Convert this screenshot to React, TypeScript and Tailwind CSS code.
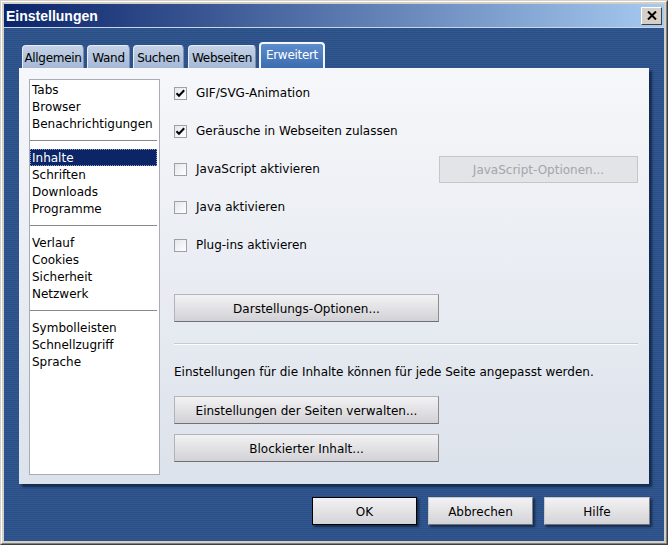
import React from "react";

const listGroups: string[][] = [
  ["Tabs", "Browser", "Benachrichtigungen"],
  ["Inhalte", "Schriften", "Downloads", "Programme"],
  ["Verlauf", "Cookies", "Sicherheit", "Netzwerk"],
  ["Symbolleisten", "Schnellzugriff", "Sprache"],
];

function CheckBox({ checked }: { checked: boolean }) {
  return (
    <div className="w-[13px] h-[13px] border border-[#9ca0a8] bg-[linear-gradient(135deg,#e4e6ea,#ffffff)] flex items-center justify-center shrink-0">
      {checked && (
        <svg width="11" height="11" viewBox="0 0 11 11">
          <path d="M1.5 5.2 L4 7.8 L9.2 2.2" stroke="#000" strokeWidth="2" fill="none" />
        </svg>
      )}
    </div>
  );
}

function Btn({
  children,
  className = "",
  disabled = false,
}: {
  children: React.ReactNode;
  className?: string;
  disabled?: boolean;
}) {
  return (
    <div
      className={
        "flex items-center justify-center border pt-[1px] " +
        (disabled
          ? "border-[#c4c6ca] bg-[#e2e4e8] text-[#a4a6aa] "
          : "border-[#b4b4b8] border-b-[#707074] border-r-[#8c8c90] bg-[linear-gradient(to_bottom,#f2f2f4,#d2d2d6)] text-black ") +
        className
      }
    >
      {children}
    </div>
  );
}

function CheckRow({ checked, label, children }: { checked: boolean; label: string; children?: React.ReactNode }) {
  return (
    <div className="h-[38px] flex items-center justify-between">
      <div className="flex items-center">
        <CheckBox checked={checked} />
        <span className="ml-[9px] leading-[17px]">{label}</span>
      </div>
      {children}
    </div>
  );
}

export default function App() {
  return (
    <div className="w-[668px] h-[545px] bg-[#d4d0c8] border border-t-[#d4d0c8] border-l-[#d4d0c8] border-r-[#404040] border-b-[#404040] font-['DejaVu_Sans',Verdana,sans-serif] text-[12px] text-black">
      <div className="h-full border border-t-white border-l-white border-r-[#808080] border-b-[#808080] p-[2px] flex flex-col">
        {/* Title bar */}
        <div className="h-[23px] bg-[linear-gradient(to_right,#0a246a,#a6caf0)] flex items-center justify-between pl-[2px] pr-[2px]">
          <span className="text-white font-bold text-[14px] leading-none font-['Liberation_Sans',Arial,sans-serif]">Einstellungen</span>
          <div className="w-[21px] h-[18px] bg-[#d4d0c8] border border-t-white border-l-white border-r-[#404040] border-b-[#404040] flex items-center justify-center">
            <svg width="10" height="9" viewBox="0 0 10 9">
              <path d="M1 0.5 L9 8.5 M9 0.5 L1 8.5" stroke="#000" strokeWidth="2" />
            </svg>
          </div>
        </div>
        <div className="h-px bg-[#c9d6e8]" />
        {/* Body */}
        <div className="flex-1 bg-[repeating-linear-gradient(to_bottom,#2a4e85_0px,#2a4e85_1px,#31588f_1px,#31588f_2px)] pt-[14px] pl-[15px] pr-[14px] flex flex-col">
          {/* Tabs */}
          <div className="h-[26px] flex items-end pl-[3px]">
            {[
              { t: "Allgemein", w: "w-[62px]", m: "" },
              { t: "Wand", w: "w-[43px]", m: "ml-[3px]" },
              { t: "Suchen", w: "w-[51px]", m: "ml-[3px]" },
              { t: "Webseiten", w: "w-[68px]", m: "ml-[4px]" },
            ].map((tab) => (
              <div
                key={tab.t}
                className={
                  "h-[23px] rounded-t-[4px] border border-b-0 border-[#e8eef8] border-r-[#7a8eb0] bg-[linear-gradient(to_bottom,#c4d2e6,#a4b8d6)] flex items-center justify-center pt-[2px] whitespace-nowrap tracking-[-0.3px] " +
                  tab.w +
                  " " +
                  tab.m
                }
              >
                {tab.t}
              </div>
            ))}
            <div className="ml-[3px] w-[66px] h-[26px] rounded-t-[4px] border-2 border-b-0 border-[#f2f6fc] bg-[linear-gradient(to_bottom,#5d8ccc,#3c6cb0)] text-white flex items-center justify-center pb-[2px] tracking-[-0.3px]">
              Erweitert
            </div>
          </div>
          {/* Panel */}
          <div className="w-[630px] h-[416px] bg-[linear-gradient(to_bottom,#f6f7fa,#dce2eb)] shadow-[3px_3px_2px_rgba(10,25,55,0.7)] flex items-start pl-[10px]">
            {/* List box */}
            <div className="mt-[11px] w-[131px] h-[396px] bg-white border border-[#a8acb4] pt-[1px] leading-[17px]">
              {listGroups.map((g, gi) => (
                <div key={gi}>
                  {gi > 0 && (
                    <div className="h-[17px] flex items-center">
                      <div className="w-[127px] h-px bg-[#8a8a8a]" />
                    </div>
                  )}
                  {g.map((item) =>
                    item === "Inhalte" ? (
                      <div
                        key={item}
                        className="h-[17px] w-[127px] pl-[1px] pt-[1px] bg-[#0b2566] text-white border border-dotted border-[#8f9fc8] leading-[14px]"
                      >
                        {item}
                      </div>
                    ) : (
                      <div key={item} className="h-[17px] pl-[2px] pt-[1px] leading-[16px] whitespace-nowrap">
                        {item}
                      </div>
                    )
                  )}
                </div>
              ))}
            </div>
            {/* Right column */}
            <div className="ml-[14px] w-[464px] pt-[6px] flex flex-col">
              <CheckRow checked={true} label="GIF/SVG-Animation" />
              <CheckRow checked={true} label="Geräusche in Webseiten zulassen" />
              <CheckRow checked={false} label="JavaScript aktivieren">
                <Btn disabled className="w-[199px] h-[27px]">
                  JavaScript-Optionen...
                </Btn>
              </CheckRow>
              <CheckRow checked={false} label="Java aktivieren" />
              <CheckRow checked={false} label="Plug-ins aktivieren" />
              <Btn className="mt-[30px] w-[265px] h-[28px]">Darstellungs-Optionen...</Btn>
              <div className="mt-[21px] h-px bg-[#c6cad2]" />
              <div className="h-px bg-[#fbfcfd]" />
              <div className="mt-[19px] leading-[17px] whitespace-nowrap">
                Einstellungen für die Inhalte können für jede Seite angepasst werden.
              </div>
              <Btn className="mt-[15px] w-[265px] h-[28px]">Einstellungen der Seiten verwalten...</Btn>
              <Btn className="mt-[10px] w-[265px] h-[28px]">Blockierter Inhalt...</Btn>
            </div>
          </div>
          {/* Bottom buttons */}
          <div className="mt-[13px] flex justify-end gap-[11px]">
            <div className="w-[105px] h-[28px] pt-[1px] border border-black bg-[linear-gradient(to_bottom,#f2f2f4,#d4d4d8)] flex items-center justify-center shadow-[2px_2px_2px_rgba(10,25,55,0.7)]">
              OK
            </div>
            <div className="w-[105px] h-[28px] pt-[1px] border border-[#c8c8cc] border-b-[#707074] border-r-[#808084] bg-[linear-gradient(to_bottom,#f2f2f4,#d4d4d8)] flex items-center justify-center shadow-[2px_2px_2px_rgba(10,25,55,0.7)]">
              Abbrechen
            </div>
            <div className="w-[106px] h-[28px] pt-[1px] border border-[#c8c8cc] border-b-[#707074] border-r-[#808084] bg-[linear-gradient(to_bottom,#f2f2f4,#d4d4d8)] flex items-center justify-center shadow-[2px_2px_2px_rgba(10,25,55,0.7)]">
              Hilfe
            </div>
          </div>
        </div>
      </div>
    </div>
  );
}
